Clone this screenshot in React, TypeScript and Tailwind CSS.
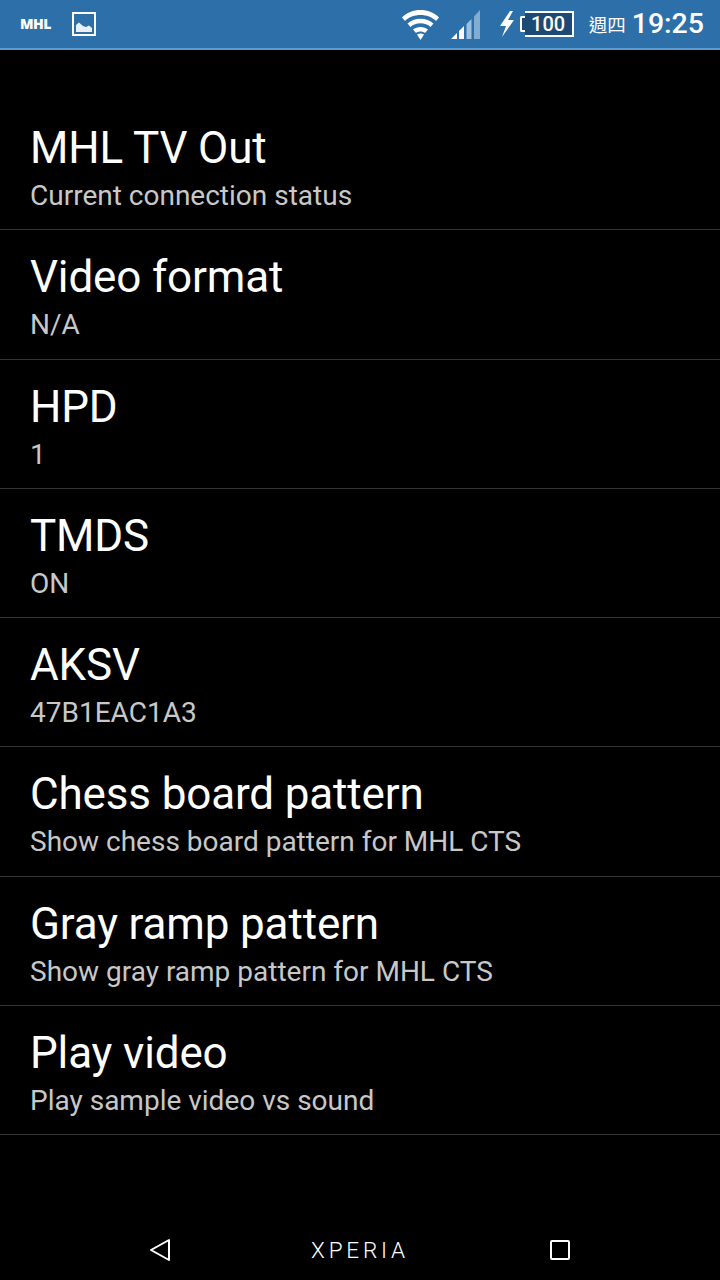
const rows = [
  ["MHL TV Out", "Current connection status"],
  ["Video format", "N/A"],
  ["HPD", "1"],
  ["TMDS", "ON"],
  ["AKSV", "47B1EAC1A3"],
  ["Chess board pattern", "Show chess board pattern for MHL CTS"],
  ["Gray ramp pattern", "Show gray ramp pattern for MHL CTS"],
  ["Play video", "Play sample video vs sound"],
];

function StatusBar() {
  return (
    <div className="flex h-[50px] items-center justify-between border-b-2 border-[#5a9bd0] bg-[#2d6fa8] pl-[20px] pr-[16px] text-white">
      <div className="flex items-center gap-[21px]">
        <span className="w-[31px] font-['Open_Sans',sans-serif] text-[14px] leading-none font-extrabold tracking-[-0.5px]">MHL</span>
        <svg width="24" height="24" viewBox="0 0 24 24">
          <rect x="1" y="1" width="22" height="22" fill="none" stroke="#fff" strokeWidth="2" />
          <path d="M4 20V13L7 10.5L11 14L14 15L17 13.5L20 16V20Z" fill="#e8eff6" />
        </svg>
      </div>
      <div className="flex items-center">
        <svg width="40" height="34" viewBox="0 0 40 34">
          <path d="M1 10.5C10 0.5 29 0.5 38 10.5L35 14C27.5 6 11.5 6 4 14Z" fill="#fff" />
          <path d="M6.5 16.5C13 10 26 10 32.5 16.5L29.5 20C24.5 15 14.5 15 9.5 20Z" fill="#fff" />
          <path d="M12 22.5C16 19 23 19 27 22.5L24 26C21.5 24 17.5 24 15 26Z" fill="#fff" />
          <path d="M16 27.5C18 26 21 26 23 27.5L19.5 33Z" fill="#fff" />
        </svg>
        <svg className="ml-[9px]" width="32" height="32" viewBox="0 0 32 32">
          <path d="M1 31L7 25V31Z" fill="#fff" />
          <path d="M9 23L14 18V31H9Z" fill="#fff" />
          <path d="M16.500 16L21.500 11V31H16.500Z" fill="#9dc0dc" />
          <path d="M24 8.500L30 2V31H24Z" fill="#82add0" />
        </svg>
        <svg className="ml-[17px]" width="16" height="26" viewBox="0 0 16 26">
          <path d="M11 0L1 15H7L3 26L15 9H9L14 0Z" fill="#fff" />
        </svg>
        <div className="ml-[5px] flex items-center">
          <div className="h-[16px] w-[6px] rounded-l-[2px] border-y-2 border-l-2 border-white bg-[#1c4a75]" />
          <div className="-ml-px flex h-[26px] w-[49px] items-center justify-center border-2 border-l-0 border-white bg-[#1c4a75] font-['Roboto',sans-serif] text-[20px] leading-none font-medium">
            100
          </div>
        </div>
        <span className="ml-[15px] font-['Noto_Sans_CJK_TC','Noto_Sans_CJK_SC',sans-serif] text-[18.5px] leading-none">週四</span>
        <span className="ml-[6px] font-['Roboto',sans-serif] text-[28.5px] leading-none font-medium">19:25</span>
      </div>
    </div>
  );
}

function NavBar() {
  return (
    <div className="relative flex h-[60px] items-center justify-center">
      <svg className="absolute left-[149px]" width="22" height="24" viewBox="0 0 22 24">
        <path d="M20 2V22L2 12Z" fill="none" stroke="#fff" strokeWidth="2" strokeLinejoin="round" />
      </svg>
      <span className="font-['Roboto',sans-serif] text-[22.5px] leading-none font-light tracking-[3.8px] text-white">XPERIA</span>
      <svg className="absolute left-[550px]" width="20" height="20" viewBox="0 0 20 20">
        <rect x="1" y="1" width="18" height="18" rx="1" fill="none" stroke="#fff" strokeWidth="2" />
      </svg>
    </div>
  );
}

export default function App() {
  return (
    <div className="flex h-[1280px] w-[720px] flex-col bg-black font-['Roboto',sans-serif]">
      <StatusBar />
      <div className="mt-[51px] flex-1">
        {rows.map(([title, sub]) => (
          <div key={title} className="h-[129.3px] border-b border-[#333] pl-[30px] pt-[21px]">
            <div className="text-[44px] leading-[52px] tracking-[-0.15px] text-white">{title}</div>
            <div className="mt-[4px] text-[28px] leading-[36px] text-[#c8c8c8]">{sub}</div>
          </div>
        ))}
      </div>
      <NavBar />
    </div>
  );
}
